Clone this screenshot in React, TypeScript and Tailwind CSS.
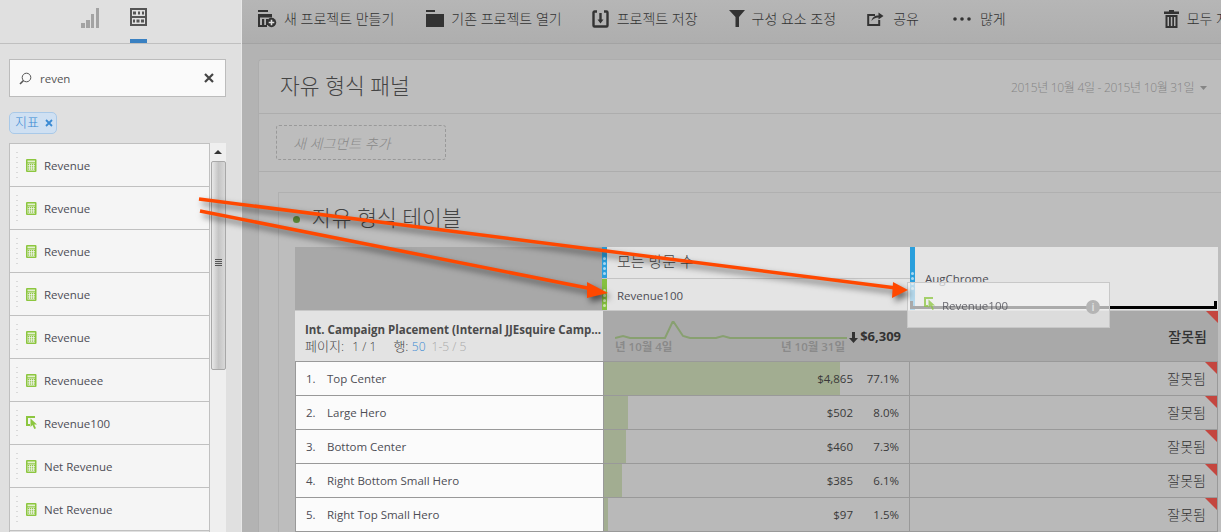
import React from "react";

const Calc = () => (
  <svg width="11" height="13" viewBox="0 0 11 13" className="shrink-0">
    <rect x="0" y="0" width="10.500" height="13" rx="1" fill="#8cc63f" />
    <rect x="1.500" y="1.500" width="7.500" height="1.800" fill="#e3f1cf" />
    <rect x="1.500" y="4.500" width="7.500" height="7" fill="#f5f5f5" />
    {[5, 7.2, 9.400].map((y) => [1.700, 3.700, 5.700, 7.700].map((x) => <rect key={`${x}-${y}`} x={x} y={y} width="1.300" height="1.300" fill="#8cc63f" />))}
  </svg>
);

const CursorIcon = ({ dim }: { dim?: boolean }) => (
  <svg width="14" height="14" viewBox="0 0 14 14" className="shrink-0" opacity={dim ? 0.75 : 1}>
    <path d="M0 0h9v2H2v6h2v2H0z" fill="#8cc63f" />
    <path d="M4.500 2.500v8.500l2-2 1.800 4 1.700-.8-1.800-3.700h2.800z" fill="#8cc63f" />
  </svg>
);

const Dots = () => (
  <div className="flex flex-col gap-[4px] w-[2px] shrink-0">
    {[0, 1, 2, 3, 4, 5].map((i) => <div key={i} className="w-[2px] h-[1px] bg-[#d9d9d9]" />)}
  </div>
);

const items: [string, boolean][] = [
  ["Revenue", false], ["Revenue", false], ["Revenue", false], ["Revenue", false], ["Revenue", false],
  ["Revenueee", false], ["Revenue100", true], ["Net Revenue", false], ["Net Revenue", false],
];

const rows = [
  ["Top Center", "$4,865", "77.1%", 236],
  ["Large Hero", "$502", "8.0%", 24],
  ["Bottom Center", "$460", "7.3%", 22],
  ["Right Bottom Small Hero", "$385", "6.1%", 18],
  ["Right Top Small Hero", "$97", "1.5%", 4],
] as const;

const Bar = ({ color, pad }: { color: string; pad: string }) => (
  <div className={`w-[5px] shrink-0 flex flex-col items-center justify-end gap-[2px] ${pad} ${color}`}>
    {[0, 1, 2, 3].map((i) => <div key={i} className="w-[3px] h-[3px] rounded-full bg-white/60" />)}
  </div>
);

const Corner = () => (
  <svg width="12" height="12" viewBox="0 0 12 12" className="absolute top-0 right-0">
    <path d="M0 0h12v12z" fill="#c4463f" />
  </svg>
);

const Tool = ({ icon, label, ml }: { icon: React.ReactNode; label: string; ml: string }) => (
  <div className={`flex items-center shrink-0 ${ml}`}>
    {icon}
    <span className="text-[14px] font-light text-[#333] whitespace-nowrap">{label}</span>
  </div>
);

export default function App() {
  return (
    <div
      className="relative w-[1221px] h-[532px] overflow-hidden flex bg-[#b3b3b3] text-[#444]"
      style={{ fontFamily: '"Open Sans","Noto Sans CJK KR",sans-serif' }}
    >
      {/* Sidebar */}
      <aside className="w-[242px] shrink-0 h-full bg-[#e0e0e0] flex flex-col border-r border-[#e8e8e8]">
        <div className="h-[44px] shrink-0 border-b border-[#c0c0c0] flex pl-[81px] gap-[31px]">
          <svg width="18" height="20" viewBox="0 0 18 20" className="mt-[8px]">
            <path d="M0 15h4v5H0zM5 12h4v8H5zM10 6h3v14h-3zM15 0h3v20h-3z" fill="#a3a3a3" />
          </svg>
          <div className="w-[17px] h-full flex flex-col justify-between pt-[8px]">
            <svg width="17" height="18" viewBox="0 0 17 18">
              <rect width="17" height="18" fill="#555" />
              <rect x="2" y="2" width="13" height="14" fill="#e0e0e0" />
              <path d="M2 8h13v2H2z" fill="#555" />
              <path d="M3 3.500h3v3H3zM8 3.500h2v3H8zM12 3.500h2v3h-2zM3 11.500h2v3H3zM6.500 11.500h3v3h-3zM11 11.500h3v3h-3z" fill="#555" />
            </svg>
            <div className="h-[4px] bg-[#3a81c2]" />
          </div>
        </div>

        <div className="mt-[15px] ml-[9px] w-[217px] h-[38px] shrink-0 bg-[#fafafa] border border-[#bcbcbc] flex items-center pl-[9px] pr-[11px]">
          <svg width="13" height="13" viewBox="0 0 13 13" fill="none" stroke="#555">
            <circle cx="7.500" cy="5.500" r="4.300" />
            <path d="M4.500 8.500L1 12" strokeWidth="1.600" />
          </svg>
          <span className="ml-[8px] mt-[2px] text-[11.500px] text-[#555] flex-1">reven</span>
          <svg width="10" height="10" viewBox="0 0 10 10" stroke="#444" strokeWidth="2.200"><path d="M1 1l8 8M9 1l-8 8" /></svg>
        </div>

        <div className="mt-[15px] ml-[9px] w-[48px] h-[22px] shrink-0 rounded-[5px] bg-[#cfe0f2] border border-[#a9c9e8] flex items-center pl-[5px] gap-[6px]">
          <span className="text-[13px] font-light text-[#3a8ad3] leading-none -mt-[2px]">지표</span>
          <svg width="8" height="8" viewBox="0 0 8 8" stroke="#3a8ad3" strokeWidth="1.800"><path d="M1 1l6 6M7 1L1 7" /></svg>
        </div>

        <div className="mt-[9px] ml-[9px] flex">
          <div className="w-[201px] border-l border-r border-t border-[#c0c0c0]">
            {items.map(([name, cur], i) => (
              <div key={i} className="h-[43px] bg-[#f5f5f5] border-b border-[#c0c0c0] flex items-center pl-[6px]">
                <Dots />
                <div className="ml-[8px] w-[14px] flex">{cur ? <CursorIcon /> : <Calc />}</div>
                <span className="ml-[4px] mt-[2px] text-[11.500px] text-[#4d4d55]">{name}</span>
              </div>
            ))}
          </div>
          <div className="w-[16px] h-[400px] bg-[#efefef] flex flex-col items-center">
            <svg width="8" height="18" viewBox="0 0 8 18" className="shrink-0"><path d="M0 11l4-4 4 4z" fill="#333" /></svg>
            <div className="w-[15px] h-[209px] rounded-[2px] border border-[#a8a8a8] bg-gradient-to-r from-[#e8e8e8] via-[#c4c4c4] to-[#d8d8d8] flex items-center justify-center pb-[3px]">
              <div className="flex flex-col gap-[1px] mb-[4px]">
                {[0, 1, 2, 3].map((i) => <div key={i} className="w-[7px] h-[1px] bg-[#555]" />)}
              </div>
            </div>
          </div>
        </div>
      </aside>

      {/* Main */}
      <main className="flex-1 min-w-0 flex flex-col">
        <header className="h-[44px] shrink-0 border-b border-[#a3a3a3] bg-gradient-to-b from-[#b6b6b6] to-[#aeaeae] flex items-center pl-[16px] pb-[6px]">
          <Tool ml="" label="새 프로젝트 만들기" icon={
            <svg width="19" height="18" viewBox="0 0 19 18" className="mr-[7px]" fill="#333">
              <path d="M0 0h10v2H0zM0 4h14v3.500H0zM0 7h2v10H0zM0 15h9v2H0zM4 9h2.200v6H4zM8 9h2v6H8z" />
              <circle cx="13.500" cy="12.500" r="4.700" />
              <path d="M12.700 9.800h1.600v2h2v1.500h-2v2h-1.600v-2h-2v-1.500h2z" fill="#ddd" />
            </svg>
          } />
          <Tool ml="ml-[32px]" label="기존 프로젝트 열기" icon={
            <svg width="18" height="17" viewBox="0 0 18 17" className="mr-[7px]" fill="#333">
              <path d="M0 0h9v2H0zM0 4h18v13H0z" />
            </svg>
          } />
          <Tool ml="ml-[30px]" label="프로젝트 저장" icon={
            <svg width="17" height="18" viewBox="0 0 17 18" className="mr-[8px]" fill="none" stroke="#333" strokeWidth="2.400">
              <path d="M5 1.500H2.500a1 1 0 0 0-1 1v13a1 1 0 0 0 1 1h12a1 1 0 0 0 1-1v-13a1 1 0 0 0-1-1H12" />
              <path d="M8.500 3v8" />
              <path d="M5.500 9.500h6L8.500 13.500z" fill="#333" stroke="none" />
            </svg>
          } />
          <Tool ml="ml-[31px]" label="구성 요소 조정" icon={
            <svg width="16" height="17" viewBox="0 0 16 17" className="mr-[7px]" fill="#333">
              <path d="M0 0h16L10 7v10H6.500V7z" />
            </svg>
          } />
          <Tool ml="ml-[31px]" label="공유" icon={
            <svg width="17" height="15" viewBox="0 0 17 15" className="mr-[9px]" fill="none" stroke="#333" strokeWidth="2">
              <path d="M8 4H1.200v10h11V9" />
              <path d="M4.500 10c.5-3.500 3-5.500 7-5.500V1.500L16.500 5 11.500 8.500V6.500C8.500 6.500 6 8 4.500 10z" fill="#333" stroke="none" />
            </svg>
          } />
          <Tool ml="ml-[34px]" label="많게" icon={
            <svg width="18" height="4" viewBox="0 0 18 4" className="mr-[9px]" fill="#333">
              <circle cx="2" cy="2" r="1.800" /><circle cx="9" cy="2" r="1.800" /><circle cx="16" cy="2" r="1.800" />
            </svg>
          } />
          <Tool ml="ml-[158px]" label="모두 지우기" icon={
            <svg width="15" height="18" viewBox="0 0 15 18" className="mr-[8px]" fill="#333">
              <path d="M5 0h5v1.500h5V4H0V1.500h5zM1.500 5h12v13h-12zM3.500 7v9h1.500V7zM6.800 7v9h1.500V7zM10 7v9h1.500V7z" fillRule="evenodd" />
            </svg>
          } />
        </header>

        <div className="flex-1 pl-[16px] pt-[15px] min-h-0">
          <div className="w-[1000px] h-[520px] bg-[#bdbdbd] border-l border-t border-[#adadad] rounded-tl-[4px]">
            <div className="h-[54px] border-b border-[#adadad] flex items-center pl-[21px] pb-[2px]">
              <span className="text-[21.500px] font-light text-[#444] leading-none w-[130px] whitespace-nowrap">자유 형식 패널</span>
              <div className="ml-[601px] mt-[4px] flex items-center shrink-0">
                <span className="text-[12px] font-light text-[#858585] whitespace-nowrap w-[185px] tracking-[-0.3px]">2015년 10월 4일 - 2015년 10월 31일</span>
                <svg width="7" height="4" viewBox="0 0 7 4" className="ml-[4px]"><path d="M0 0h7L3.500 4z" fill="#858585" /></svg>
              </div>
            </div>
            <div className="h-[58px] border-b border-[#adadad] pl-[17px] pt-[11px]">
              <div className="w-[170px] h-[35px] rounded-[3px] border border-dashed border-[#999] flex items-center pl-[16px]">
                <span className="text-[14px] font-light italic text-[#8a8a8a] mt-[1px]">새 세그먼트 추가</span>
              </div>
            </div>

            <div className="ml-[19px] mt-[20px] border-l border-t border-[#b0b0b0] pl-[14px] h-[400px]">
              <div className="h-[54px] flex items-center pb-[4px]">
                <div className="w-[7px] h-[7px] rounded-full bg-[#5d8a37] mt-[3px]" />
                <span className="ml-[12px] text-[21.500px] font-light text-[#444] leading-none">자유 형식 테이블</span>
              </div>

              <div className="w-[923px] ml-[2px]">
                {/* column headers */}
                <div className="flex h-[64px] border-b border-[#c8c8c8]">
                  <div className="w-[307px] bg-[#a8a8a8]" />
                  <div className="w-[308px] flex flex-col">
                    <div className="h-[32px] flex bg-[#e4e4e4] border-b border-[#c4c4c4]">
                      <Bar color="bg-[#2a9fdc]" pad="pb-[3px]" />
                      <span className="ml-[10px] self-center text-[15px] font-light text-[#444] -mt-[2px]">모든 방문 수</span>
                    </div>
                    <div className="flex-1 flex bg-[#e4e4e4]">
                      <Bar color="bg-[#85c13f]" pad="pb-[3px]" />
                      <span className="ml-[10px] self-center mt-[2px] text-[11.500px] text-[#4d4d55]">Revenue100</span>
                    </div>
                  </div>
                  <div className="flex-1 flex bg-[#e4e4e4]">
                    <Bar color="bg-[#2a9fdc]" pad="pb-[20px]" />
                    <span className="ml-[10px] mt-[23px] text-[11.500px] text-[#4d4d55]">AugChrome</span>
                  </div>
                </div>

                {/* table head */}
                <div className="flex h-[51px] border-b border-[#999]">
                  <div className="w-[308px] bg-[#e3e3e3] pl-[10px] pt-[11px] leading-none">
                    <div className="text-[11.500px] font-bold text-[#4a4a4a] whitespace-nowrap leading-[16px]">Int. Campaign Placement (Internal JJEsquire Camp...</div>
                    <div className="mt-[1px] text-[13px] font-light text-[#444] leading-[15px] whitespace-nowrap">
                      페이지: <span className="ml-[5px] text-[12px] text-[#444]">1 / 1</span><span className="ml-[17px]">행:</span>{" "}
                      <span className="text-[12px] text-[#3a8ad3]">50</span><span className="ml-[6px] text-[12px] text-[#aaa]">1-5 / 5</span>
                    </div>
                  </div>
                  <div className="w-[307px] bg-[#a9a9a9] relative flex justify-end items-center pr-[9px]">
                    <svg width="232" height="22" viewBox="0 0 232 22" className="absolute left-[12px] top-[10px]" fill="none" stroke="#88a070" strokeWidth="2">
                      <path d="M0 17l8-2 7 2h35l8-17 10 15 7 2h26l7-2 7 2h120" />
                    </svg>
                    <span className="absolute left-[12px] top-[27px] text-[11.500px] font-semibold text-[#8a8a8a]">년 10월 4일</span>
                    <span className="absolute left-[178px] top-[27px] text-[11.500px] font-semibold text-[#8a8a8a] whitespace-nowrap">년 10월 31일</span>
                    <svg width="9" height="11" viewBox="0 0 9 11" className="mr-[2px] mt-[2px]" fill="#333"><path d="M3 0h3v6h3L4.500 11 0 6h3z" /></svg>
                    <span className="text-[13px] font-bold text-[#333] mt-[2px]">$6,309</span>
                  </div>
                  <div className="flex-1 bg-[#a9a9a9] relative flex items-center justify-end pr-[11px]">
                    <Corner />
                    <span className="text-[14px] font-medium text-[#333]">잘못됨</span>
                  </div>
                </div>

                {/* rows */}
                {rows.map(([name, val, pct, w], i) => (
                  <div key={i} className="flex h-[34px] border-b border-[#999]">
                    <div className="w-[308px] bg-[#fbfbfb] flex items-center pl-[10px] border-l border-[#999] text-[11.500px] text-[#4d4d55]">
                      <span className="w-[21px]">{i + 1}.</span>
                      <span>{name}</span>
                    </div>
                    <div className="w-[307px] relative bg-[#b9b9b9] border-l border-r border-[#999] flex items-center justify-end text-[11.500px] text-[#3a3a3a]">
                      <div className="absolute left-0 top-0 bottom-0 bg-[#a2ad91]" style={{ width: w }} />
                      <span className="relative">{val}</span>
                      <span className="relative w-[46px] text-right mr-[10px]">{pct}</span>
                    </div>
                    <div className="flex-1 bg-[#b9b9b9] relative border-r border-[#999] flex items-center justify-end pr-[11px]">
                      <Corner />
                      <span className="text-[14px] font-light text-[#333]">잘못됨</span>
                    </div>
                  </div>
                ))}
              </div>
            </div>
          </div>
        </div>
      </main>

      {/* Drop indicator */}
      <div className="absolute left-[910px] top-[301px] w-[307px] h-[8px] border-b-[3px] border-l-[3px] border-r-[3px] border-black" />

      {/* Drag ghost */}
      <div className="absolute left-[907px] top-[282px] w-[203px] h-[46px] bg-[#f2f2f2]/70 border border-[#c8c8c8] flex items-start pl-[16px] pt-[14px]">
        <CursorIcon dim />
        <span className="ml-[4px] text-[11.500px] text-[#4d4d55] leading-[18px] opacity-80">Revenue100</span>
        <div className="absolute left-[178px] top-[17px] w-[14px] h-[14px] rounded-full bg-[#b4b4b4] text-[#dedede] text-[10px] font-bold leading-[14px] text-center">i</div>
      </div>

      {/* Annotation arrows */}
      <svg width="1221" height="532" viewBox="0 0 1221 532" className="absolute left-0 top-0 pointer-events-none drop-shadow-[3px_4px_3px_rgba(0,0,0,0.55)]">
        <path d="M199 199L900 288.500" stroke="#ff4800" strokeWidth="3.500" />
        <path d="M908 290L893 282L892 298z" fill="#ff4800" />
        <path d="M200 211L595 289.500" stroke="#ff4800" strokeWidth="3.500" />
        <path d="M608 293L587 282L587 298z" fill="#ff4800" />
      </svg>
    </div>
  );
}
